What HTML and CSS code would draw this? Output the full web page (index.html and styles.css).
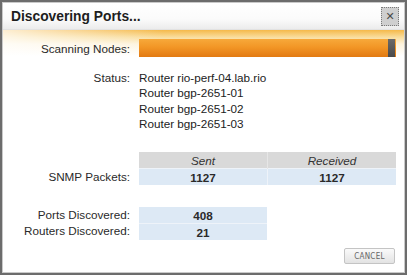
FILE: index.html
```html
<!DOCTYPE html>
<html lang="en">
<head>
  <meta charset="UTF-8" />
  <title>Discovering Ports...</title>
  <link rel="stylesheet" href="styles.css">
</head>
<body>
  <div class="dialog">
    <div class="title-bar">
      <h1>Discovering Ports...</h1>
      <button class="close-btn" title="Close">&#x2715;</button>
    </div>

    <div class="dialog-body">
      <div class="row scan-row">
        <span class="label">Scanning Nodes:</span>
        <div class="progress"><div class="progress-fill"></div><div class="progress-cap"></div></div>
      </div>

      <div class="row status-row">
        <span class="label">Status:</span>
        <ul class="status-list">
          <li>Router rio-perf-04.lab.rio</li>
          <li>Router bgp-2651-01</li>
          <li>Router bgp-2651-02</li>
          <li>Router bgp-2651-03</li>
        </ul>
      </div>

      <div class="row packets-row">
        <span class="label">SNMP Packets:</span>
        <table class="stats">
          <tr><th>Sent</th><th>Received</th></tr>
          <tr><td>1127</td><td>1127</td></tr>
        </table>
      </div>

      <div class="row counts-row">
        <div class="labels">
          <span class="label">Ports Discovered:</span>
          <span class="label">Routers Discovered:</span>
        </div>
        <table class="stats counts">
          <tr><td>408</td></tr>
          <tr><td>21</td></tr>
        </table>
      </div>

      <div class="actions">
        <button class="cancel-btn">CANCEL</button>
      </div>
    </div>
  </div>
</body>
</html>
```

FILE: styles.css
```css
body {
  margin: 0;
  font-family: 'Liberation Sans', Arial, sans-serif;
  font-size: 11.7px;
  color: #222;
  background: #fff;
}

.dialog {
  width: 407px;
  height: 275px;
  box-sizing: border-box;
  border: 2px solid #6c6c6c;
  box-shadow: inset 0 0 0 1px #c9c9c9;
  padding: 1px;
  background: #fff;
  display: flex;
  flex-direction: column;
}

.title-bar {
  height: 26px;
  display: flex;
  align-items: center;
  justify-content: space-between;
  padding: 0 5px 0 8px;
  background: linear-gradient(#ffffff, #fbfbfb 60%, #ececec);
  border-bottom: 1px solid #e2e2e2;
}

.title-bar h1 {
  margin: 0;
  font-size: 13.8px;
  font-weight: bold;
  color: #1e1e1e;
}

.close-btn {
  -webkit-appearance: none;
  appearance: none;
  width: 18px;
  height: 19px;
  padding: 0;
  border: 1px dotted #7a7a7a;
  background: #cfcfcf;
  color: #4a4a4a;
  font-size: 11px;
  font-weight: bold;
  line-height: 17px;
  font-family: 'DejaVu Sans', sans-serif;
}

.dialog-body {
  flex: 1;
  padding: 9px 0 0;
  background:
    linear-gradient(90deg, rgba(255, 255, 255, 0.75), rgba(255, 255, 255, 0) 40%),
    linear-gradient(#f5b94a, #f9dc9a 7px, #fdf3dc 14px, #ffffff 26px);
}

.row {
  display: grid;
  grid-template-columns: 127px 257px;
  column-gap: 9px;
}

.label {
  text-align: right;
  color: #2a2a2a;
}

.scan-row {
  align-items: center;
}

.progress {
  height: 18px;
  display: flex;
  background: linear-gradient(#f7a93a, #f29626 45%, #e27a12);
}

.progress-fill {
  flex: 1;
}

.progress-cap {
  width: 7px;
  margin-right: 1px;
  background: linear-gradient(#6a6a6a, #4a4a4a);
}

.status-row {
  margin-top: 13px;
  line-height: 15.3px;
}

.status-list {
  list-style: none;
  margin: 0;
  padding: 0;
}

.packets-row {
  margin-top: 21px;
  align-items: end;
}

.packets-row .label {
  line-height: 16px;
}

.stats {
  border-collapse: collapse;
  width: 100%;
  text-align: center;
}

.stats th,
.stats td {
  width: 50%;
  height: 16px;
  padding: 0;
  line-height: 15px;
}

.stats th {
  background: #d9d9d9;
  font-weight: normal;
  font-style: italic;
  color: #333;
  border-left: 1px solid #e6e6e6;
}

.stats td {
  background: #dde9f5;
  font-weight: bold;
  color: #2a2a2a;
  border-left: 1px solid #eef3f9;
  border-top: 1px solid #eef3f9;
}

.stats tr > :first-child {
  border-left: none;
}

.counts-row {
  margin-top: 22px;
}

.labels {
  display: flex;
  flex-direction: column;
}

.labels .label {
  line-height: 16px;
}

.stats.counts {
  width: 128px;
}

.stats.counts td {
  width: auto;
}

.stats.counts tr:first-child td {
  border-top: none;
}

.actions {
  display: flex;
  justify-content: flex-end;
  padding: 8px 9px 0 0;
}

.cancel-btn {
  width: 51px;
  height: 16px;
  padding: 0;
  border: 1px solid #c4c4c4;
  border-radius: 2px;
  background: linear-gradient(#fafafa, #e3e3e3);
  font-family: 'DejaVu Sans Condensed', 'DejaVu Sans', sans-serif;
  font-size: 8px;
  color: #666;
  letter-spacing: 0.3px;
}
```
